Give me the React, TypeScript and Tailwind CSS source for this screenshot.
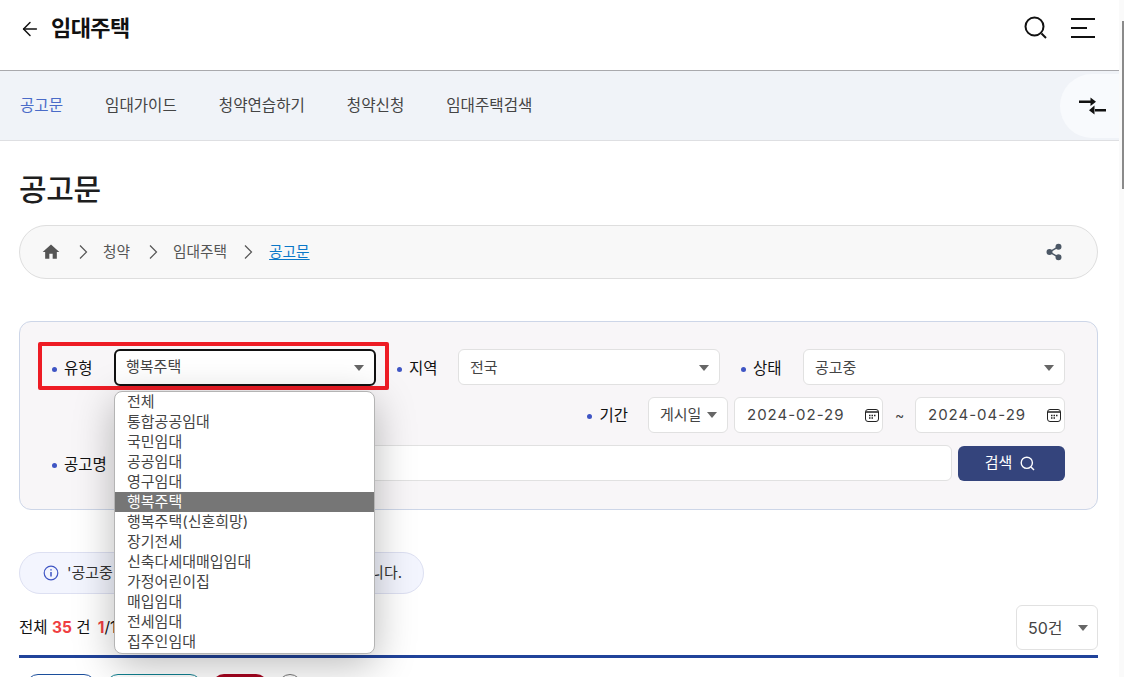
import { ArrowLeft, Share2 } from "lucide-react";

const FONT = "font-['Inter','Noto_Sans_CJK_KR',sans-serif]";

const TYPES = [
  "전체",
  "통합공공임대",
  "국민임대",
  "공공임대",
  "영구임대",
  "행복주택",
  "행복주택(신혼희망)",
  "장기전세",
  "신축다세대매입임대",
  "가정어린이집",
  "매입임대",
  "전세임대",
  "집주인임대",
];

const TABS = ["공고문", "임대가이드", "청약연습하기", "청약신청", "임대주택검색"];

function Caret() {
  return (
    <svg width="12" height="8" viewBox="0 0 12 8" className="shrink-0">
      <path d="M1 1h10L6 7z" fill="#666" />
    </svg>
  );
}

function Crumb({ className }: { className: string }) {
  return (
    <svg width="20" height="20" viewBox="0 0 20 20" fill="none" stroke="#555" strokeWidth="1.2" className={`shrink-0 ${className}`}>
      <path d="M7 3.5l6.5 6.5L7 16.500" />
    </svg>
  );
}

function Label({ text, className }: { text: string; className?: string }) {
  return (
    <span className={`flex shrink-0 items-center gap-[7px] text-[15.5px] text-[#111] ${className ?? ""}`}>
      <span className="size-[5px] rounded-full bg-[#3f55c4]" />
      {text}
    </span>
  );
}

function Select({ value, className }: { value: string; className?: string }) {
  return (
    <div className={`flex h-9 items-center justify-between rounded-md border border-[#e1e1e1] bg-white pl-[11px] pr-[9px] text-[15px] text-[#444] ${className ?? ""}`}>
      {value}
      <Caret />
    </div>
  );
}

function DateField({ value, className }: { value: string; className: string }) {
  return (
    <div className={`flex h-9 items-center justify-between rounded-md border border-[#e1e1e1] bg-white pl-3 pr-[3px] text-[15px] tracking-[1px] text-[#444] ${className}`}>
      {value}
      <svg width="14" height="14" viewBox="0 0 14 14" fill="none" stroke="#222">
        <rect x="0.5" y="1.500" width="13" height="12" rx="2.500" />
        <path d="M1 4h12" strokeWidth="1.500" />
        <path d="M4 7.500h1.500M6.500 7.500h1.500M9 7.500h1.500M4 10h1.500M6.500 10h1.500" strokeWidth="1.400" />
      </svg>
    </div>
  );
}

export default function App() {
  return (
    <div className={`relative h-[677px] w-[1124px] overflow-hidden bg-white ${FONT}`}>
      <div className="w-[1119px]">
        {/* top bar */}
        <header className="flex h-[70px] items-center justify-between pb-[14px] pl-5 pr-6">
          <div className="flex items-center gap-[10px]">
            <ArrowLeft size={22} strokeWidth={1.6} color="#111" className="-ml-px mt-px" />
            <h1 className="text-[22px] font-bold tracking-[-0.6px] text-[#111]">임대주택</h1>
          </div>
          <div className="flex items-center gap-[23px]">
            <svg width="24" height="24" viewBox="0 0 24 24" fill="none" stroke="#111" strokeWidth="2">
              <circle cx="10.500" cy="10.500" r="9" />
              <path d="M17.500 17.500l4.500 4.500" />
            </svg>
            <svg width="24" height="20" viewBox="0 0 24 20" stroke="#111" strokeWidth="2">
              <path d="M0 1h24M0 10h16M0 19h24" />
            </svg>
          </div>
        </header>

        {/* tabs */}
        <nav className="flex h-[71px] items-center gap-[42px] border-y border-t-[#a9a9ad] border-b-[#dedfe2] bg-[#f0f3f8] pl-5 text-[15.6px] text-[#444]">
          {TABS.map((tab, i) => (
            <span key={tab} className={i === 0 ? "text-[#4a6bc8]" : ""}>
              {tab}
            </span>
          ))}
          <div className="ml-auto flex h-16 w-[59px] items-center rounded-l-[32px] bg-[#f8fafd] pl-[19px]">
            <svg width="28" height="18" viewBox="0 0 28 18" fill="#111">
              <path d="M0 3.500h13v2.500H0zM11.500 .5L17 4.750 11.500 9zM15 12h12v2.500H15zM15.500 8.500L10 13.250l5.500 4.250z" />
            </svg>
          </div>
        </nav>

        <main className="pl-[19px] pr-[21px]">
          <h2 className="mt-[26px] text-[30px] font-medium leading-[44px] tracking-[-0.4px] text-[#1e1e1e]">공고문</h2>

          {/* breadcrumb */}
          <div className="mt-[14px] flex h-[54px] items-center rounded-[27px] border border-[#dedede] bg-[#f8f8f8] pl-[21px] pr-[34px] text-[14.7px] text-[#555]">
            <svg width="20" height="20" viewBox="0 0 24 24" fill="#555" className="shrink-0">
              <path d="M10 20v-6h4v6h5v-8h3L12 3 2 12h3v8z" />
            </svg>
            <Crumb className="ml-[12px] mr-[10px]" />
            <span>청약</span>
            <Crumb className="ml-[13px] mr-[10px]" />
            <span>임대주택</span>
            <Crumb className="mx-[11px]" />
            <span className="text-[#0b78c8] underline underline-offset-2">공고문</span>
            <Share2 size={18} fill="#4c5866" color="#4c5866" className="ml-auto" />
          </div>

          {/* search box */}
          <section className="mt-[42px] flex h-[189px] flex-col rounded-xl border border-[#cdd6e8] bg-[#f8f6f8] px-8 py-[27px]">
            <div className="flex h-9 items-center">
              <div className="relative flex h-9 items-start">
                <Label text="유형" className="h-9 w-[62px] pt-1" />
                <div className="flex h-[37px] w-[262px] items-center justify-between rounded-md border-2 border-[#111] bg-white pl-[10px] pr-[9px] text-[15px] text-[#444]">
                  행복주택
                  <Caret />
                </div>
                {/* highlight box around the open field */}
                <div className="pointer-events-none absolute -left-[14px] -top-[7px] h-12 w-[351px] rounded-[2px] border-4 border-[#ee1c25]" />
                <ul className="absolute left-[62px] top-[42px] z-10 w-[261px] overflow-hidden rounded-lg border border-[#b4b4b4] bg-white pb-px text-[15px] leading-5 text-[#444] shadow-[0_10px_40px_rgba(0,0,0,0.28)]">
                  {TYPES.map((type, i) => (
                    <li key={type} className={`h-5 pl-3 ${i === 5 ? "bg-[#767676] text-white" : ""}`}>
                      {type}
                    </li>
                  ))}
                </ul>
              </div>
              <Label text="지역" className="ml-[21px] h-9 w-[61px] pt-1" />
              <Select value="전국" className="w-[262px] pt-0.5" />
              <Label text="상태" className="ml-[21px] h-9 w-[62px] pt-1" />
              <Select value="공고중" className="flex-1 pt-0.5" />
            </div>
            <div className="mt-3 flex h-9 items-center justify-end">
              <Label text="기간" className="mr-[20px] h-9 pt-0.5" />
              <Select value="게시일" className="mr-[6px] w-[80px] pl-3" />
              <DateField value="2024-02-29" className="w-[149px]" />
              <span className="ml-3 mr-[11px] w-[9px] text-sm text-[#444]">~</span>
              <DateField value="2024-04-29" className="w-[150px]" />
            </div>
            <div className="mt-3 flex h-9 items-center">
              <Label text="공고명" className="h-9 w-[62px] pt-1" />
              <div className="h-9 flex-1 rounded-md border border-[#e1e1e1] bg-white" />
              <button className="ml-1.5 flex h-[35px] w-[107px] items-center justify-center gap-2 rounded-md bg-[#34447c] pr-[3px] text-[15px] text-white">
                검색
                <svg width="15" height="15" viewBox="0 0 15 15" fill="none" stroke="#fff" strokeWidth="1.400">
                  <circle cx="6.800" cy="6.800" r="5.600" />
                  <path d="M11 11l3 3" />
                </svg>
              </button>
            </div>
          </section>

          {/* notice */}
          <div className="mt-[42px] flex h-[42px] w-[405px] items-center gap-2 rounded-[21px] border border-[#dde0f2] bg-[#f3f5fe] pl-[23px] text-[15px] text-[#333]">
            <svg width="16" height="16" viewBox="0 0 16 16" fill="none" stroke="#3f55c4" strokeWidth="1.200" className="shrink-0">
              <circle cx="8" cy="8" r="6.800" />
              <path d="M8 7v4.500M8 4.200v1.400" strokeWidth="1.500" />
            </svg>
            <span className="flex-1 whitespace-nowrap">'공고중'</span>
            <span className="pr-[21px]">니다.</span>
          </div>

          {/* result count */}
          <div className="mt-[11px] flex h-[45px] items-center justify-between">
            <span className="text-[15.5px] text-[#111]">
              전체 <b className="font-bold text-[#ef3e42]">35</b> 건 <b className="ml-[3px] font-bold text-[#ef3e42]">1</b>/1
            </span>
            <div className="flex h-[45px] w-[82px] items-center justify-between rounded-md border border-[#e1e1e1] bg-white pl-[11px] pr-2 text-base text-[#444]">
              50건
              <Caret />
            </div>
          </div>
          <div className="mt-[5px] h-[3px] bg-[#20439a]" />

          {/* cut off badges */}
          <div className="mt-4 flex items-center gap-[10px] pl-[7px]">
            <span className="h-6 w-[70px] rounded-full border border-[#1c4f9c]" />
            <span className="h-6 w-[96px] rounded-full border border-[#108090]" />
            <span className="h-6 w-[56px] rounded-full bg-[#a5051f]" />
            <span className="size-6 rounded-full border border-[#777]" />
          </div>
        </main>
      </div>

      {/* page scrollbar */}
      <div className="absolute right-0 top-0 h-full w-[5px] bg-[#fafafa]">
        <div className="ml-[3px] mt-[21px] h-[168px] w-[2px] bg-[#8a8a8a]" />
      </div>
    </div>
  );
}
